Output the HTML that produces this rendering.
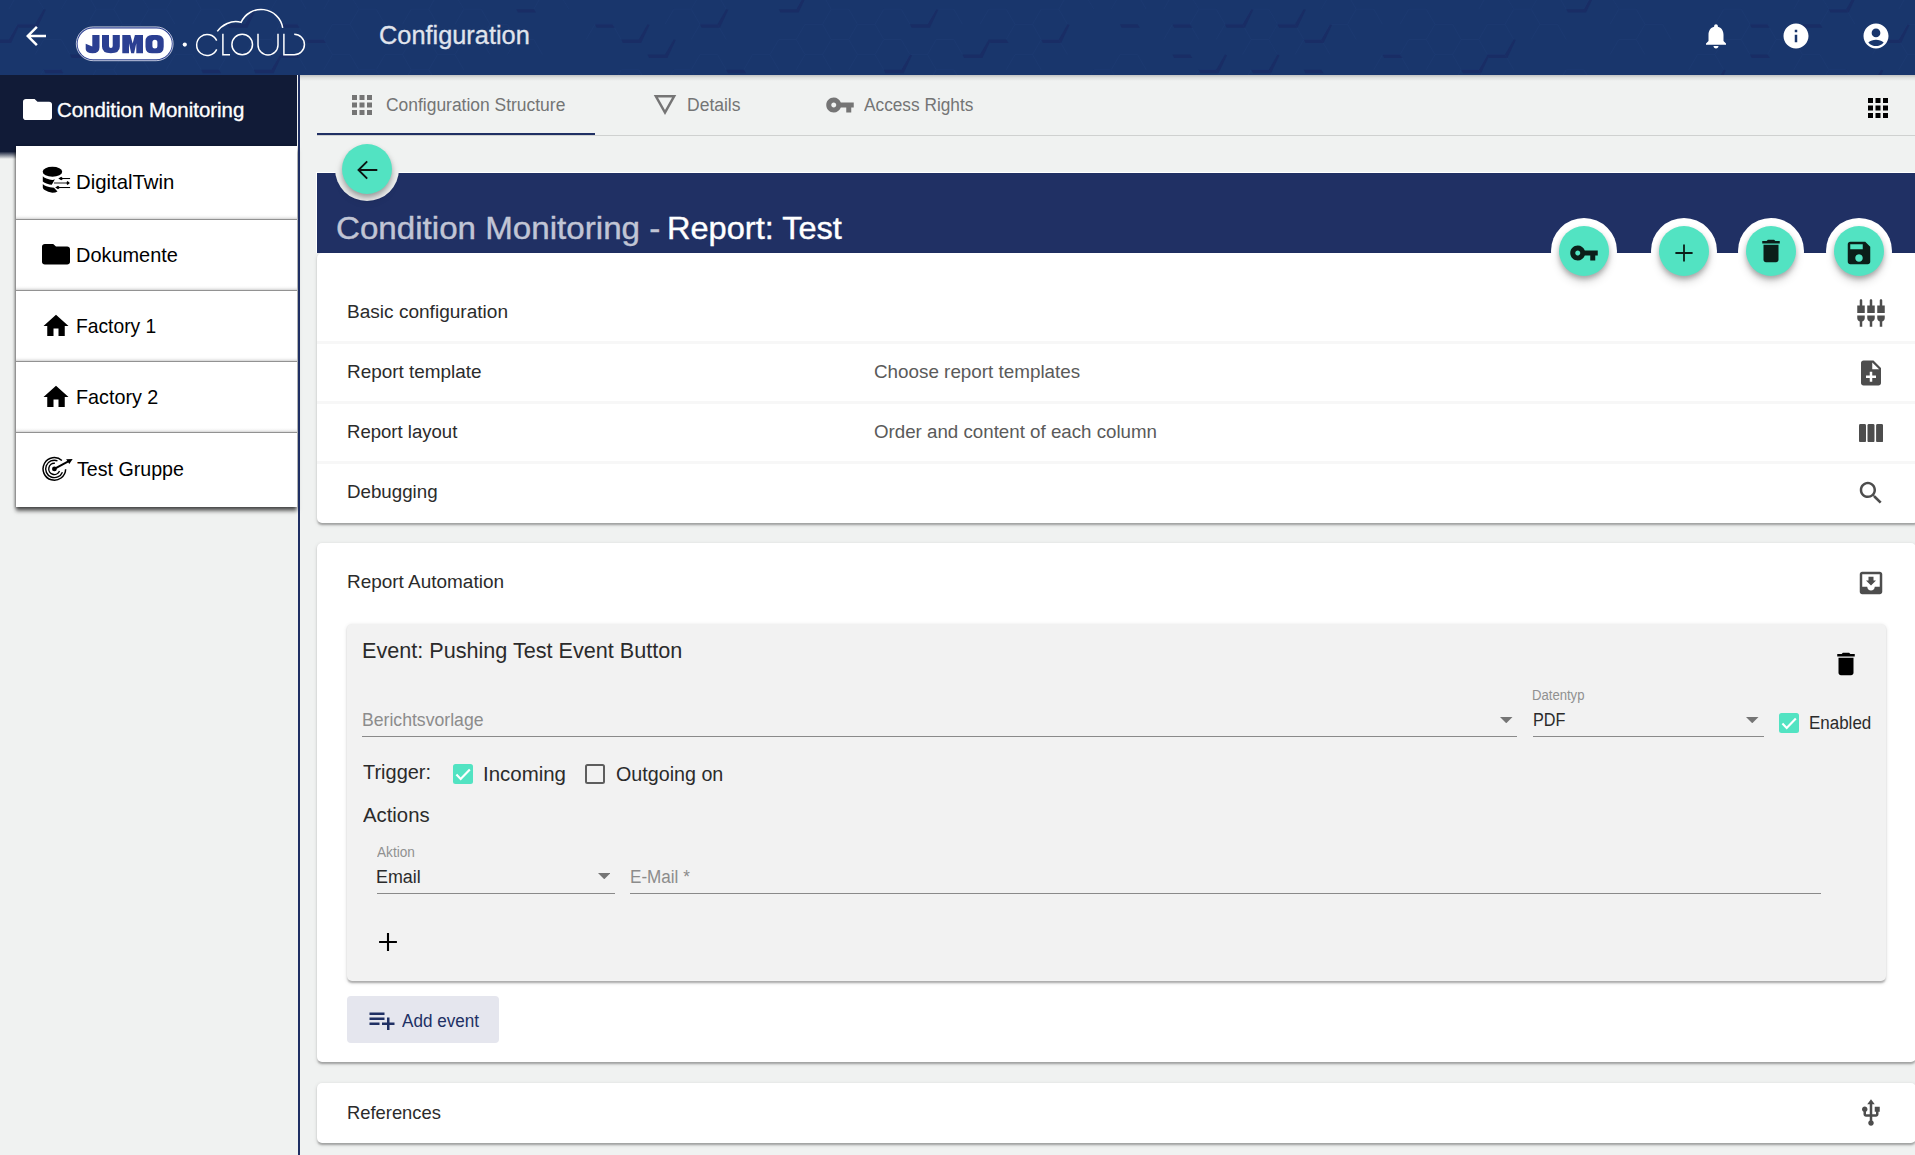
<!DOCTYPE html>
<html lang="en">
<head>
<meta charset="utf-8">
<title>Configuration</title>
<style>
*{box-sizing:border-box;margin:0;padding:0}
html,body{width:1915px;height:1155px;overflow:hidden;background:#f0f2f1;font-family:"Liberation Sans",sans-serif;color:#212121}
.abs{position:absolute}
.t{position:absolute;white-space:nowrap;transform-origin:0 50%;line-height:1}
svg{position:absolute;display:block}
/* header */
#hdr{position:absolute;left:0;top:0;width:1915px;height:75px;background:#19366c;overflow:hidden}
#hdrsh{position:absolute;left:299px;top:75px;width:1616px;height:6px;background:linear-gradient(rgba(0,0,0,.2),rgba(0,0,0,.07) 45%,rgba(0,0,0,0))}
/* sidebar */
#sbh{position:absolute;left:0;top:75px;width:297px;height:71px;background:#111b37}
#sbsh{position:absolute;left:0;top:146px;width:16px;height:13px;background:linear-gradient(#111b37 0,#111b37 42%,rgba(17,27,55,.55) 68%,rgba(17,27,55,0) 100%)}
#sbl{position:absolute;left:16px;top:146px;width:281px;height:361px;background:#fff;box-shadow:0 4px 4px rgba(0,0,0,.58),-1.500px 1px 3px rgba(0,0,0,.4)}
.sdiv{position:absolute;left:0;width:281px;height:5px;background:linear-gradient(rgba(0,0,0,0),rgba(0,0,0,.04) 40%,rgba(0,0,0,.14) 72%,#8a8a8a 80%,#9a9a9a 100%)}
#sbline{position:absolute;left:298.300px;top:75px;width:1.400px;height:1080px;background:#1f2f63}
/* tabs */
#tabline{position:absolute;left:317px;top:134.700px;width:1598px;height:1.200px;background:#cfd1d0}
#tabact{position:absolute;left:317px;top:132.800px;width:278px;height:2.400px;background:#203064}
/* title bar */
#tbar{position:absolute;left:317px;top:173px;width:1598px;height:80px;background:#203064}
.halo{position:absolute;border-radius:50%}
.fab{position:absolute;width:50px;height:50px;border-radius:50%;background:#52e3c2;box-shadow:0 3px 5px rgba(0,0,0,.25),0 6px 10px rgba(0,0,0,.14)}
/* cards */
.card{position:absolute;left:317px;width:1599px;background:#fff;border-radius:5px;box-shadow:0 2.500px 2px -1.250px rgba(0,0,0,.17),0 1.250px 2px rgba(0,0,0,.11),0 1.250px 4px rgba(0,0,0,.12)}
.rsep{position:absolute;left:317px;width:1598px;height:3px;background:#f7f7f7}
#evt{position:absolute;left:347px;top:623.500px;width:1539px;height:357px;background:#f2f2f2;border-radius:5px;box-shadow:0 2.500px 2px -1.250px rgba(0,0,0,.17),0 1.250px 2px rgba(0,0,0,.11),0 1.250px 4px rgba(0,0,0,.12)}
.ul{position:absolute;height:1px;background:#8a8a8a}
#addbtn{position:absolute;left:347px;top:996px;width:152px;height:47px;background:#e5e6ee;border-radius:4px}
.cb{position:absolute;width:20px;height:20px;border-radius:2.5px;background:#52e3c2}
.cbo{position:absolute;width:20px;height:20px;border-radius:2.5px;border:2.3px solid #5e5e5e;background:transparent}
</style>
</head>
<body>
<!-- HEADER -->
<div id="hdrsh"></div>
<div id="hdr"><!-- HEX --><svg style="left:0;top:0" width="1915" height="75" viewBox="0 0 1915 75"><path d="M-43.8 -21.2L-35.0 -36.3L-17.5 -36.3L-8.8 -21.2M-43.8 69.8L-35.0 54.6L-17.5 54.6L-8.8 69.8M-17.5 -36.3L-8.8 -51.5L8.8 -51.5L17.5 -36.3M-17.5 -6.0L-8.8 -21.2L8.8 -21.2L17.5 -6.0M8.8 9.2L17.5 -6.0L35.0 -6.0L43.8 9.2M8.8 39.5L17.5 24.3L35.0 24.3L43.8 39.5M8.8 100.1L17.5 84.9L35.0 84.9L43.8 100.1M35.0 -36.3L43.8 -51.5L61.2 -51.5L70.0 -36.3M35.0 54.6L43.8 39.5L61.2 39.5L70.0 54.6M35.0 84.9L43.8 69.8L61.2 69.8L70.0 84.9M61.2 -21.2L70.0 -36.3L87.5 -36.3L96.2 -21.2M61.2 9.2L70.0 -6.0L87.5 -6.0L96.2 9.2M87.5 -36.3L96.2 -51.5L113.8 -51.5L122.5 -36.3M87.5 24.3L96.2 9.2L113.8 9.2L122.5 24.3M87.5 84.9L96.2 69.8L113.8 69.8L122.5 84.9M113.8 -21.2L122.5 -36.3L140.0 -36.3L148.8 -21.2M113.8 9.2L122.5 -6.0L140.0 -6.0L148.8 9.2M113.8 39.5L122.5 24.3L140.0 24.3L148.8 39.5M113.8 69.8L122.5 54.6L140.0 54.6L148.8 69.8M113.8 100.1L122.5 84.9L140.0 84.9L148.8 100.1M140.0 -36.3L148.8 -51.5L166.2 -51.5L175.0 -36.3M140.0 24.3L148.8 9.2L166.2 9.2L175.0 24.3M140.0 54.6L148.8 39.5L166.2 39.5L175.0 54.6M166.2 -21.2L175.0 -36.3L192.5 -36.3L201.2 -21.2M166.2 9.2L175.0 -6.0L192.5 -6.0L201.2 9.2M166.2 69.8L175.0 54.6L192.5 54.6L201.2 69.8M192.5 -6.0L201.2 -21.2L218.8 -21.2L227.5 -6.0M192.5 24.3L201.2 9.2L218.8 9.2L227.5 24.3M218.8 -21.2L227.5 -36.3L245.0 -36.3L253.8 -21.2M218.8 69.8L227.5 54.6L245.0 54.6L253.8 69.8M245.0 -36.3L253.8 -51.5L271.2 -51.5L280.0 -36.3M245.0 24.3L253.8 9.2L271.2 9.2L280.0 24.3M245.0 54.6L253.8 39.5L271.2 39.5L280.0 54.6M271.2 -21.2L280.0 -36.3L297.5 -36.3L306.2 -21.2M271.2 9.2L280.0 -6.0L297.5 -6.0L306.2 9.2M271.2 39.5L280.0 24.3L297.5 24.3L306.2 39.5M271.2 69.8L280.0 54.6L297.5 54.6L306.2 69.8M271.2 100.1L280.0 84.9L297.5 84.9L306.2 100.1M297.5 54.6L306.2 39.5L323.8 39.5L332.5 54.6M323.8 -21.2L332.5 -36.3L350.0 -36.3L358.8 -21.2M323.8 9.2L332.5 -6.0L350.0 -6.0L358.8 9.2M323.8 39.5L332.5 24.3L350.0 24.3L358.8 39.5M323.8 69.8L332.5 54.6L350.0 54.6L358.8 69.8M350.0 24.3L358.8 9.2L376.2 9.2L385.0 24.3M350.0 84.9L358.8 69.8L376.2 69.8L385.0 84.9M376.2 69.8L385.0 54.6L402.5 54.6L411.2 69.8M402.5 24.3L411.2 9.2L428.8 9.2L437.5 24.3M402.5 54.6L411.2 39.5L428.8 39.5L437.5 54.6M402.5 84.9L411.2 69.8L428.8 69.8L437.5 84.9M428.8 -21.2L437.5 -36.3L455.0 -36.3L463.8 -21.2M428.8 9.2L437.5 -6.0L455.0 -6.0L463.8 9.2M428.8 69.8L437.5 54.6L455.0 54.6L463.8 69.8M455.0 -6.0L463.8 -21.2L481.2 -21.2L490.0 -6.0M455.0 24.3L463.8 9.2L481.2 9.2L490.0 24.3M455.0 54.6L463.8 39.5L481.2 39.5L490.0 54.6M481.2 39.5L490.0 24.3L507.5 24.3L516.2 39.5M507.5 -36.3L516.2 -51.5L533.8 -51.5L542.5 -36.3M507.5 -6.0L516.2 -21.2L533.8 -21.2L542.5 -6.0M507.5 54.6L516.2 39.5L533.8 39.5L542.5 54.6M533.8 -21.2L542.5 -36.3L560.0 -36.3L568.8 -21.2M533.8 9.2L542.5 -6.0L560.0 -6.0L568.8 9.2M533.8 100.1L542.5 84.9L560.0 84.9L568.8 100.1M560.0 -36.3L568.8 -51.5L586.2 -51.5L595.0 -36.3M586.2 -21.2L595.0 -36.3L612.5 -36.3L621.2 -21.2M586.2 39.5L595.0 24.3L612.5 24.3L621.2 39.5M612.5 -6.0L621.2 -21.2L638.8 -21.2L647.5 -6.0M612.5 84.9L621.2 69.8L638.8 69.8L647.5 84.9M665.0 24.3L673.8 9.2L691.2 9.2L700.0 24.3M665.0 84.9L673.8 69.8L691.2 69.8L700.0 84.9M691.2 9.2L700.0 -6.0L717.5 -6.0L726.2 9.2M691.2 39.5L700.0 24.3L717.5 24.3L726.2 39.5M691.2 69.8L700.0 54.6L717.5 54.6L726.2 69.8M743.8 69.8L752.5 54.6L770.0 54.6L778.8 69.8M770.0 54.6L778.8 39.5L796.2 39.5L805.0 54.6M796.2 9.2L805.0 -6.0L822.5 -6.0L831.2 9.2M796.2 39.5L805.0 24.3L822.5 24.3L831.2 39.5M796.2 69.8L805.0 54.6L822.5 54.6L831.2 69.8M822.5 -36.3L831.2 -51.5L848.8 -51.5L857.5 -36.3M822.5 24.3L831.2 9.2L848.8 9.2L857.5 24.3M822.5 54.6L831.2 39.5L848.8 39.5L857.5 54.6M848.8 -21.2L857.5 -36.3L875.0 -36.3L883.8 -21.2M848.8 39.5L857.5 24.3L875.0 24.3L883.8 39.5M848.8 69.8L857.5 54.6L875.0 54.6L883.8 69.8M848.8 100.1L857.5 84.9L875.0 84.9L883.8 100.1M875.0 -36.3L883.8 -51.5L901.2 -51.5L910.0 -36.3M875.0 -6.0L883.8 -21.2L901.2 -21.2L910.0 -6.0M875.0 24.3L883.8 9.2L901.2 9.2L910.0 24.3M875.0 54.6L883.8 39.5L901.2 39.5L910.0 54.6M901.2 69.8L910.0 54.6L927.5 54.6L936.2 69.8M927.5 24.3L936.2 9.2L953.8 9.2L962.5 24.3M927.5 54.6L936.2 39.5L953.8 39.5L962.5 54.6M927.5 84.9L936.2 69.8L953.8 69.8L962.5 84.9M980.0 -36.3L988.8 -51.5L1006.2 -51.5L1015.0 -36.3M980.0 24.3L988.8 9.2L1006.2 9.2L1015.0 24.3M1006.2 39.5L1015.0 24.3L1032.5 24.3L1041.2 39.5M1006.2 69.8L1015.0 54.6L1032.5 54.6L1041.2 69.8M1006.2 100.1L1015.0 84.9L1032.5 84.9L1041.2 100.1M1032.5 24.3L1041.2 9.2L1058.8 9.2L1067.5 24.3M1032.5 54.6L1041.2 39.5L1058.8 39.5L1067.5 54.6M1058.8 9.2L1067.5 -6.0L1085.0 -6.0L1093.8 9.2M1085.0 -6.0L1093.8 -21.2L1111.2 -21.2L1120.0 -6.0M1085.0 84.9L1093.8 69.8L1111.2 69.8L1120.0 84.9M1111.2 -21.2L1120.0 -36.3L1137.5 -36.3L1146.2 -21.2M1111.2 9.2L1120.0 -6.0L1137.5 -6.0L1146.2 9.2M1111.2 69.8L1120.0 54.6L1137.5 54.6L1146.2 69.8M1163.8 9.2L1172.5 -6.0L1190.0 -6.0L1198.8 9.2M1163.8 39.5L1172.5 24.3L1190.0 24.3L1198.8 39.5M1190.0 24.3L1198.8 9.2L1216.2 9.2L1225.0 24.3M1190.0 84.9L1198.8 69.8L1216.2 69.8L1225.0 84.9M1216.2 -21.2L1225.0 -36.3L1242.5 -36.3L1251.2 -21.2M1216.2 39.5L1225.0 24.3L1242.5 24.3L1251.2 39.5M1216.2 100.1L1225.0 84.9L1242.5 84.9L1251.2 100.1M1242.5 24.3L1251.2 9.2L1268.8 9.2L1277.5 24.3M1242.5 54.6L1251.2 39.5L1268.8 39.5L1277.5 54.6M1242.5 84.9L1251.2 69.8L1268.8 69.8L1277.5 84.9M1268.8 39.5L1277.5 24.3L1295.0 24.3L1303.8 39.5M1295.0 54.6L1303.8 39.5L1321.2 39.5L1330.0 54.6M1321.2 9.2L1330.0 -6.0L1347.5 -6.0L1356.2 9.2M1321.2 39.5L1330.0 24.3L1347.5 24.3L1356.2 39.5M1347.5 -36.3L1356.2 -51.5L1373.8 -51.5L1382.5 -36.3M1347.5 24.3L1356.2 9.2L1373.8 9.2L1382.5 24.3M1373.8 69.8L1382.5 54.6L1400.0 54.6L1408.8 69.8M1400.0 -36.3L1408.8 -51.5L1426.2 -51.5L1435.0 -36.3M1400.0 24.3L1408.8 9.2L1426.2 9.2L1435.0 24.3M1400.0 54.6L1408.8 39.5L1426.2 39.5L1435.0 54.6M1426.2 -21.2L1435.0 -36.3L1452.5 -36.3L1461.2 -21.2M1426.2 39.5L1435.0 24.3L1452.5 24.3L1461.2 39.5M1426.2 69.8L1435.0 54.6L1452.5 54.6L1461.2 69.8M1426.2 100.1L1435.0 84.9L1452.5 84.9L1461.2 100.1M1452.5 54.6L1461.2 39.5L1478.8 39.5L1487.5 54.6M1452.5 84.9L1461.2 69.8L1478.8 69.8L1487.5 84.9M1478.8 -21.2L1487.5 -36.3L1505.0 -36.3L1513.8 -21.2M1478.8 9.2L1487.5 -6.0L1505.0 -6.0L1513.8 9.2M1478.8 39.5L1487.5 24.3L1505.0 24.3L1513.8 39.5M1478.8 69.8L1487.5 54.6L1505.0 54.6L1513.8 69.8M1505.0 -36.3L1513.8 -51.5L1531.2 -51.5L1540.0 -36.3M1505.0 24.3L1513.8 9.2L1531.2 9.2L1540.0 24.3M1531.2 -21.2L1540.0 -36.3L1557.5 -36.3L1566.2 -21.2M1531.2 9.2L1540.0 -6.0L1557.5 -6.0L1566.2 9.2M1531.2 39.5L1540.0 24.3L1557.5 24.3L1566.2 39.5M1531.2 100.1L1540.0 84.9L1557.5 84.9L1566.2 100.1M1557.5 -36.3L1566.2 -51.5L1583.8 -51.5L1592.5 -36.3M1557.5 -6.0L1566.2 -21.2L1583.8 -21.2L1592.5 -6.0M1557.5 84.9L1566.2 69.8L1583.8 69.8L1592.5 84.9M1583.8 9.2L1592.5 -6.0L1610.0 -6.0L1618.8 9.2M1610.0 24.3L1618.8 9.2L1636.2 9.2L1645.0 24.3M1610.0 54.6L1618.8 39.5L1636.2 39.5L1645.0 54.6M1636.2 -21.2L1645.0 -36.3L1662.5 -36.3L1671.2 -21.2M1636.2 39.5L1645.0 24.3L1662.5 24.3L1671.2 39.5M1636.2 100.1L1645.0 84.9L1662.5 84.9L1671.2 100.1M1688.8 69.8L1697.5 54.6L1715.0 54.6L1723.8 69.8M1715.0 -36.3L1723.8 -51.5L1741.2 -51.5L1750.0 -36.3M1715.0 -6.0L1723.8 -21.2L1741.2 -21.2L1750.0 -6.0M1715.0 24.3L1723.8 9.2L1741.2 9.2L1750.0 24.3M1715.0 54.6L1723.8 39.5L1741.2 39.5L1750.0 54.6M1741.2 -21.2L1750.0 -36.3L1767.5 -36.3L1776.2 -21.2M1741.2 39.5L1750.0 24.3L1767.5 24.3L1776.2 39.5M1741.2 100.1L1750.0 84.9L1767.5 84.9L1776.2 100.1M1767.5 -36.3L1776.2 -51.5L1793.8 -51.5L1802.5 -36.3M1767.5 -6.0L1776.2 -21.2L1793.8 -21.2L1802.5 -6.0M1767.5 54.6L1776.2 39.5L1793.8 39.5L1802.5 54.6M1793.8 9.2L1802.5 -6.0L1820.0 -6.0L1828.8 9.2M1793.8 69.8L1802.5 54.6L1820.0 54.6L1828.8 69.8M1820.0 -6.0L1828.8 -21.2L1846.2 -21.2L1855.0 -6.0M1820.0 24.3L1828.8 9.2L1846.2 9.2L1855.0 24.3M1820.0 84.9L1828.8 69.8L1846.2 69.8L1855.0 84.9M1846.2 -21.2L1855.0 -36.3L1872.5 -36.3L1881.2 -21.2M1846.2 100.1L1855.0 84.9L1872.5 84.9L1881.2 100.1M1872.5 -6.0L1881.2 -21.2L1898.8 -21.2L1907.5 -6.0M1872.5 54.6L1881.2 39.5L1898.8 39.5L1907.5 54.6M1898.8 -21.2L1907.5 -36.3L1925.0 -36.3L1933.8 -21.2M1898.8 9.2L1907.5 -6.0L1925.0 -6.0L1933.8 9.2M1898.8 39.5L1907.5 24.3L1925.0 24.3L1933.8 39.5M1898.8 69.8L1907.5 54.6L1925.0 54.6L1933.8 69.8" fill="none" stroke="#2a4580" stroke-opacity=".20" stroke-width="1"/><path d="M-8.8 39.5L8.8 39.5L17.5 24.3L19.5 25.0L11.1 42.9L-7.0 42.9ZM-8.8 100.1L8.8 100.1L11.1 103.5L-7.0 103.5ZM17.5 -6.0L35.0 -6.0L37.4 -2.6L19.2 -2.6ZM17.5 24.3L35.0 24.3L43.8 9.2L45.8 9.8L37.4 27.7L19.2 27.7ZM43.8 69.8L61.2 69.8L63.6 73.2L45.5 73.2ZM70.0 54.6L87.5 54.6L89.9 58.0L71.7 58.0ZM122.5 -6.0L140.0 -6.0L148.8 -21.2L150.8 -20.5L142.4 -2.6L124.2 -2.6ZM122.5 54.6L140.0 54.6L148.8 39.5L150.8 40.1L142.4 58.0L124.2 58.0ZM175.0 84.9L192.5 84.9L194.9 88.3L176.7 88.3ZM201.2 69.8L218.8 69.8L221.1 73.2L202.9 73.2ZM227.5 -6.0L245.0 -6.0L253.8 -21.2L255.8 -20.5L247.4 -2.6L229.2 -2.6ZM227.5 24.3L245.0 24.3L253.8 9.2L255.8 9.8L247.4 27.7L229.2 27.7ZM227.5 84.9L245.0 84.9L247.4 88.3L229.2 88.3ZM227.5 115.2L245.0 115.2L253.8 100.1L255.8 100.8L247.4 118.6L229.2 118.6ZM253.8 69.8L271.2 69.8L280.0 54.6L282.0 55.3L273.6 73.2L255.4 73.2ZM280.0 24.3L297.5 24.3L299.9 27.7L281.7 27.7ZM280.0 54.6L297.5 54.6L299.9 58.0L281.7 58.0ZM306.2 39.5L323.8 39.5L326.1 42.9L307.9 42.9ZM437.5 -6.0L455.0 -6.0L463.8 -21.2L465.8 -20.5L457.4 -2.6L439.2 -2.6ZM437.5 115.2L455.0 115.2L457.4 118.6L439.2 118.6ZM516.2 -21.2L533.8 -21.2L542.5 -36.3L544.5 -35.6L536.1 -17.8L518.0 -17.8ZM516.2 9.2L533.8 9.2L536.1 12.6L518.0 12.6ZM542.5 -6.0L560.0 -6.0L568.8 -21.2L570.8 -20.5L562.4 -2.6L544.2 -2.6ZM542.5 84.9L560.0 84.9L562.4 88.3L544.2 88.3ZM542.5 115.2L560.0 115.2L568.8 100.1L570.8 100.8L562.4 118.6L544.2 118.6ZM568.8 -21.2L586.2 -21.2L588.6 -17.8L570.5 -17.8ZM568.8 100.1L586.2 100.1L595.0 84.9L597.0 85.6L588.6 103.5L570.5 103.5ZM595.0 -6.0L612.5 -6.0L621.2 -21.2L623.3 -20.5L614.9 -2.6L596.7 -2.6ZM595.0 24.3L612.5 24.3L614.9 27.7L596.7 27.7ZM621.2 39.5L638.8 39.5L647.5 24.3L649.5 25.0L641.1 42.9L623.0 42.9ZM647.5 54.6L665.0 54.6L673.8 39.5L675.8 40.1L667.4 58.0L649.2 58.0ZM647.5 115.2L665.0 115.2L673.8 100.1L675.8 100.8L667.4 118.6L649.2 118.6ZM700.0 24.3L717.5 24.3L726.2 9.2L728.3 9.8L719.9 27.7L701.7 27.7ZM700.0 115.2L717.5 115.2L719.9 118.6L701.7 118.6ZM726.2 69.8L743.8 69.8L746.1 73.2L728.0 73.2ZM752.5 115.2L770.0 115.2L778.8 100.1L780.8 100.8L772.4 118.6L754.2 118.6ZM778.8 9.2L796.2 9.2L805.0 -6.0L807.0 -5.3L798.6 12.6L780.5 12.6ZM831.2 -21.2L848.8 -21.2L851.1 -17.8L833.0 -17.8ZM831.2 100.1L848.8 100.1L857.5 84.9L859.5 85.6L851.1 103.5L833.0 103.5ZM857.5 -6.0L875.0 -6.0L877.4 -2.6L859.2 -2.6ZM883.8 -21.2L901.2 -21.2L910.0 -36.3L912.0 -35.6L903.6 -17.8L885.5 -17.8ZM883.8 69.8L901.2 69.8L910.0 54.6L912.0 55.3L903.6 73.2L885.5 73.2ZM910.0 24.3L927.5 24.3L936.2 9.2L938.3 9.8L929.9 27.7L911.7 27.7ZM910.0 115.2L927.5 115.2L936.2 100.1L938.3 100.8L929.9 118.6L911.7 118.6ZM936.2 -21.2L953.8 -21.2L956.1 -17.8L938.0 -17.8ZM962.5 -6.0L980.0 -6.0L982.4 -2.6L964.2 -2.6ZM962.5 54.6L980.0 54.6L988.8 39.5L990.8 40.1L982.4 58.0L964.2 58.0ZM962.5 115.2L980.0 115.2L982.4 118.6L964.2 118.6ZM988.8 -21.2L1006.2 -21.2L1015.0 -36.3L1017.0 -35.6L1008.6 -17.8L990.5 -17.8ZM988.8 39.5L1006.2 39.5L1008.6 42.9L990.5 42.9ZM988.8 100.1L1006.2 100.1L1008.6 103.5L990.5 103.5ZM1041.2 -21.2L1058.8 -21.2L1067.5 -36.3L1069.5 -35.6L1061.1 -17.8L1043.0 -17.8ZM1041.2 39.5L1058.8 39.5L1067.5 24.3L1069.5 25.0L1061.1 42.9L1043.0 42.9ZM1120.0 24.3L1137.5 24.3L1139.9 27.7L1121.7 27.7ZM1146.2 100.1L1163.8 100.1L1172.5 84.9L1174.5 85.6L1166.1 103.5L1148.0 103.5ZM1172.5 24.3L1190.0 24.3L1192.4 27.7L1174.2 27.7ZM1172.5 54.6L1190.0 54.6L1192.4 58.0L1174.2 58.0ZM1198.8 69.8L1216.2 69.8L1225.0 54.6L1227.0 55.3L1218.6 73.2L1200.5 73.2ZM1225.0 24.3L1242.5 24.3L1251.2 9.2L1253.3 9.8L1244.9 27.7L1226.7 27.7ZM1251.2 69.8L1268.8 69.8L1277.5 54.6L1279.5 55.3L1271.1 73.2L1253.0 73.2ZM1277.5 -6.0L1295.0 -6.0L1303.8 -21.2L1305.8 -20.5L1297.4 -2.6L1279.2 -2.6ZM1277.5 24.3L1295.0 24.3L1303.8 9.2L1305.8 9.8L1297.4 27.7L1279.2 27.7ZM1303.8 39.5L1321.2 39.5L1330.0 24.3L1332.0 25.0L1323.6 42.9L1305.5 42.9ZM1303.8 69.8L1321.2 69.8L1323.6 73.2L1305.5 73.2ZM1303.8 100.1L1321.2 100.1L1323.6 103.5L1305.5 103.5ZM1356.2 -21.2L1373.8 -21.2L1382.5 -36.3L1384.5 -35.6L1376.1 -17.8L1358.0 -17.8ZM1382.5 -6.0L1400.0 -6.0L1402.4 -2.6L1384.2 -2.6ZM1382.5 54.6L1400.0 54.6L1402.4 58.0L1384.2 58.0ZM1382.5 115.2L1400.0 115.2L1408.8 100.1L1410.8 100.8L1402.4 118.6L1384.2 118.6ZM1408.8 -21.2L1426.2 -21.2L1435.0 -36.3L1437.0 -35.6L1428.6 -17.8L1410.5 -17.8ZM1435.0 -6.0L1452.5 -6.0L1461.2 -21.2L1463.3 -20.5L1454.9 -2.6L1436.7 -2.6ZM1461.2 69.8L1478.8 69.8L1487.5 54.6L1489.5 55.3L1481.1 73.2L1463.0 73.2ZM1461.2 100.1L1478.8 100.1L1487.5 84.9L1489.5 85.6L1481.1 103.5L1463.0 103.5ZM1487.5 54.6L1505.0 54.6L1513.8 39.5L1515.8 40.1L1507.4 58.0L1489.2 58.0ZM1513.8 -21.2L1531.2 -21.2L1533.6 -17.8L1515.5 -17.8ZM1566.2 9.2L1583.8 9.2L1592.5 -6.0L1594.5 -5.3L1586.1 12.6L1568.0 12.6ZM1592.5 115.2L1610.0 115.2L1618.8 100.1L1620.8 100.8L1612.4 118.6L1594.2 118.6ZM1618.8 -21.2L1636.2 -21.2L1638.6 -17.8L1620.5 -17.8ZM1697.5 84.9L1715.0 84.9L1723.8 69.8L1725.8 70.5L1717.4 88.3L1699.2 88.3ZM1723.8 -21.2L1741.2 -21.2L1743.6 -17.8L1725.5 -17.8ZM1723.8 100.1L1741.2 100.1L1743.6 103.5L1725.5 103.5ZM1750.0 24.3L1767.5 24.3L1769.9 27.7L1751.7 27.7ZM1750.0 54.6L1767.5 54.6L1769.9 58.0L1751.7 58.0ZM1750.0 115.2L1767.5 115.2L1769.9 118.6L1751.7 118.6ZM1802.5 24.3L1820.0 24.3L1822.4 27.7L1804.2 27.7ZM1828.8 9.2L1846.2 9.2L1855.0 -6.0L1857.0 -5.3L1848.6 12.6L1830.5 12.6ZM1828.8 100.1L1846.2 100.1L1848.6 103.5L1830.5 103.5ZM1855.0 84.9L1872.5 84.9L1881.2 69.8L1883.3 70.5L1874.9 88.3L1856.7 88.3ZM1881.2 39.5L1898.8 39.5L1907.5 24.3L1909.5 25.0L1901.1 42.9L1883.0 42.9ZM1907.5 115.2L1925.0 115.2L1933.8 100.1L1935.8 100.8L1927.4 118.6L1909.2 118.6Z" fill="#1a1f5a" fill-opacity=".36"/></svg><!-- /HEX --></div>

<!-- SIDEBAR -->
<div id="sbh"></div>
<div id="sbsh"></div>
<div id="sbl">
  <div class="sdiv" style="top:69px"></div>
  <div class="sdiv" style="top:140px"></div>
  <div class="sdiv" style="top:211px"></div>
  <div class="sdiv" style="top:281.500px"></div>
</div>
<div id="sbline"></div>

<!-- TABS -->
<div id="tabline"></div>
<div id="tabact"></div>

<!-- TITLE BAR -->
<div style="position:absolute;left:316px;top:172px;width:1600px;height:81px;background:#fff"></div>
<div id="tbar"></div>

<!-- CARDS -->
<div class="card" style="top:253px;height:269.500px;width:1602px;border-radius:5px"></div>
<div class="rsep" style="top:341px"></div>
<div class="rsep" style="top:401px"></div>
<div class="rsep" style="top:461px"></div>
<div class="card" style="top:543px;height:519px"></div>
<div id="evt"></div>
<div id="addbtn"></div>
<div class="card" style="top:1083px;height:60px"></div>

<!-- FABS -->
<div class="halo" style="left:335px;top:137px;width:64px;height:64px;background:#f0f2f1"></div>
<div class="fab" style="left:342px;top:144px"></div>
<div class="halo" style="left:1551px;top:218px;width:66px;height:66px;background:#fff"></div>
<div class="halo" style="left:1651px;top:218px;width:66px;height:66px;background:#fff"></div>
<div class="halo" style="left:1738px;top:218px;width:66px;height:66px;background:#fff"></div>
<div class="halo" style="left:1826px;top:218px;width:66px;height:66px;background:#fff"></div>
<div class="fab" style="left:1559px;top:226px"></div>
<div class="fab" style="left:1659px;top:226px"></div>
<div class="fab" style="left:1746px;top:226px"></div>
<div class="fab" style="left:1834px;top:226px"></div>

<!-- TEXT -->
<span class="t" style="left:379.41px;top:22.66px;font-size:25.5px;line-height:25.5px;color:#e0e4ec;transform:scaleX(0.9940);-webkit-text-stroke:.3px #e0e4ec;">Configuration</span>
<span class="t" style="left:56.60px;top:99.98px;font-size:20.4px;line-height:20.4px;color:#ffffff;transform:scaleX(1.0017);-webkit-text-stroke:.35px #fff;">Condition Monitoring</span>
<span class="t" style="left:76.00px;top:171.98px;font-size:20.4px;line-height:20.4px;color:#000;transform:scaleX(0.9975);">DigitalTwin</span>
<span class="t" style="left:76.02px;top:244.98px;font-size:20.4px;line-height:20.4px;color:#000;transform:scaleX(0.9773);">Dokumente</span>
<span class="t" style="left:76.06px;top:315.98px;font-size:20.4px;line-height:20.4px;color:#000;transform:scaleX(0.9444);">Factory 1</span>
<span class="t" style="left:76.03px;top:386.98px;font-size:20.4px;line-height:20.4px;color:#000;transform:scaleX(0.9684);">Factory 2</span>
<span class="t" style="left:77.00px;top:458.98px;font-size:20.4px;line-height:20.4px;color:#000;transform:scaleX(0.9627);">Test Gruppe</span>
<span class="t" style="left:385.60px;top:97.14px;font-size:17.85px;line-height:17.85px;color:#747575;transform:scaleX(0.9773);">Configuration Structure</span>
<span class="t" style="left:687.02px;top:97.14px;font-size:17.85px;line-height:17.85px;color:#747575;transform:scaleX(0.9810);">Details</span>
<span class="t" style="left:863.60px;top:97.14px;font-size:17.85px;line-height:17.85px;color:#747575;transform:scaleX(0.9671);">Access Rights</span>
<span class="t" style="left:335.96px;top:213.27px;font-size:31.875px;line-height:31.875px;color:#c1c5d5;transform:scaleX(1.0404);-webkit-text-stroke:.4px #c1c5d5;">Condition Monitoring -</span>
<span class="t" style="left:666.96px;top:213.27px;font-size:31.875px;line-height:31.875px;color:#ffffff;transform:scaleX(1.0217);-webkit-text-stroke:.4px #fff;">Report: Test</span>
<span class="t" style="left:347.00px;top:302.06px;font-size:19.125px;line-height:19.125px;color:#2b2b2b;transform:scaleX(0.9973);">Basic configuration</span>
<span class="t" style="left:347.01px;top:362.06px;font-size:19.125px;line-height:19.125px;color:#2b2b2b;transform:scaleX(0.9901);">Report template</span>
<span class="t" style="left:347.03px;top:422.06px;font-size:19.125px;line-height:19.125px;color:#2b2b2b;transform:scaleX(0.9705);">Report layout</span>
<span class="t" style="left:347.02px;top:482.06px;font-size:19.125px;line-height:19.125px;color:#2b2b2b;transform:scaleX(0.9800);">Debugging</span>
<span class="t" style="left:874.00px;top:362.06px;font-size:19.125px;line-height:19.125px;color:#5a5a5a;transform:scaleX(0.9852);">Choose report templates</span>
<span class="t" style="left:874.00px;top:422.06px;font-size:19.125px;line-height:19.125px;color:#5a5a5a;transform:scaleX(0.9795);">Order and content of each column</span>
<span class="t" style="left:347.01px;top:572.06px;font-size:19.125px;line-height:19.125px;color:#2b2b2b;transform:scaleX(0.9917);">Report Automation</span>
<span class="t" style="left:362.06px;top:638.82px;font-size:22.95px;line-height:22.95px;color:#2b2b2b;transform:scaleX(0.9419);">Event: Pushing Test Event Button</span>
<span class="t" style="left:362.08px;top:710.06px;font-size:19.125px;line-height:19.125px;color:#8c8c8c;transform:scaleX(0.9225);">Berichtsvorlage</span>
<span class="t" style="left:1532.48px;top:688.16px;font-size:14.28px;line-height:14.28px;color:#909090;transform:scaleX(0.9187);">Datentyp</span>
<span class="t" style="left:1532.55px;top:710.06px;font-size:19.125px;line-height:19.125px;color:#2b2b2b;transform:scaleX(0.8482);">PDF</span>
<span class="t" style="left:1808.71px;top:713.06px;font-size:19.125px;line-height:19.125px;color:#2b2b2b;transform:scaleX(0.8876);">Enabled</span>
<span class="t" style="left:363.00px;top:761.98px;font-size:20.4px;line-height:20.4px;color:#2b2b2b;transform:scaleX(0.9789);">Trigger:</span>
<span class="t" style="left:483.40px;top:763.98px;font-size:20.4px;line-height:20.4px;color:#2b2b2b;transform:scaleX(1.0025);">Incoming</span>
<span class="t" style="left:616.00px;top:763.98px;font-size:20.4px;line-height:20.4px;color:#2b2b2b;transform:scaleX(0.9660);">Outgoing on</span>
<span class="t" style="left:363.00px;top:804.98px;font-size:20.4px;line-height:20.4px;color:#2b2b2b;transform:scaleX(0.9959);">Actions</span>
<span class="t" style="left:377.40px;top:845.16px;font-size:14.28px;line-height:14.28px;color:#909090;transform:scaleX(0.9557);">Aktion</span>
<span class="t" style="left:376.46px;top:867.06px;font-size:19.125px;line-height:19.125px;color:#2b2b2b;transform:scaleX(0.9355);">Email</span>
<span class="t" style="left:629.71px;top:867.06px;font-size:19.125px;line-height:19.125px;color:#8c8c8c;transform:scaleX(0.8938);">E-Mail *</span>
<span class="t" style="left:402.00px;top:1013.14px;font-size:17.85px;line-height:17.85px;color:#203064;transform:scaleX(0.9577);">Add event</span>
<span class="t" style="left:347.04px;top:1103.06px;font-size:19.125px;line-height:19.125px;color:#2b2b2b;transform:scaleX(0.9608);">References</span>
<!-- /TEXT -->
<!-- LOGO -->
<svg style="left:0;top:0" width="330" height="75" viewBox="0 0 330 75">
<rect x="76.300" y="26.900" width="96.800" height="33.800" rx="16.900" fill="#2b3f92" stroke="#fff" stroke-width=".7"/>
<rect x="77.600" y="28.500" width="94.200" height="30.700" rx="15.350" fill="#fff"/>
<g fill="#2b3f92">
<path d="M92.300 34.900H99.500V47.200Q99.500 53.300 92.600 53.300Q86.300 53.300 85.700 49.200V43.700L92.300 46.500Z"/>
<path d="M102 34.900H109V46Q109 47.900 110.900 47.900Q112.700 47.900 112.700 46V34.900H119.800V46.600Q119.800 53.300 110.900 53.300Q102 53.300 102 46.600Z"/>
<path d="M122.300 53.200V34.900H130.400L132.650 43.400L134.900 34.900H143V53.200H136.300V43.200L134.100 53.200H131.200L129 43.200V53.200Z"/>
<path fill-rule="evenodd" d="M152 34.900H157.200Q163.700 34.900 163.700 41.400V46.700Q163.700 53.300 157.200 53.300H152Q145.500 53.300 145.500 46.700V41.400Q145.500 34.900 152 34.900ZM154.900 39.700Q152.400 39.700 152.400 42.200V46Q152.400 48.500 154.900 48.500Q157.400 48.500 157.400 46V42.200Q157.400 39.700 154.900 39.700Z"/>
</g>
<circle cx="184.800" cy="44.600" r="2.100" fill="#fff"/>
<g fill="none" stroke="#fff" stroke-width="1.500" stroke-linecap="butt">
<path d="M216.700 40.600A10.500 10.500 0 1 0 216.700 49.400"/>
<path d="M222.900 33.800V54.800H230"/>
<circle cx="242.200" cy="44.500" r="10.300"/>
<path d="M258 33.800V45A10 10 0 0 0 278 45V33.800"/>
<path d="M283.900 33.800V54.800H294.200A10.250 10.250 0 0 0 294.200 34.300"/>
<path d="M217.300 31.400C221.500 25.500 231.500 19.300 241.100 22.400A21.900 21.900 0 0 1 282.700 27.800"/>
</g>
</svg>
<!-- digitaltwin icon -->
<svg style="left:42px;top:166px" width="29" height="28" viewBox="42 166 29 28">
<g fill="#000">
<ellipse cx="52.450" cy="171.750" rx="9.750" ry="4.900"/>
<path d="M42.800 176.300Q43.800 177.600 46.400 178.500Q49.900 179.800 52.300 179.900Q53.800 179.800 54.900 179.200L51.800 184.800Q49.900 184.800 46.400 183.600Q43.600 182.600 42.800 181.500Z"/>
<path d="M42.800 184.100Q43.800 185.400 46.400 186.300Q49.900 187.600 54 187.700L57.500 191.500Q55.500 192.700 52.300 192.700Q48.100 192.300 44.700 190.100Q43 188.900 42.800 187.400Z"/>
<path d="M60 178H70.100V179.050H60Z"/>
<path d="M58.300 178.500L61.300 176.700Q62.300 177.600 63.400 178.500Q62.300 179.400 61.300 180.300Z"/>
<path d="M58 187H70.100V188.050H58Z"/>
<path d="M55.200 187.500L58 185.800Q59 186.600 59.900 187.500Q59 188.400 58 189.300Z"/>
<path d="M69.900 183L67.500 181.100Q66.600 182 65.800 183Q66.600 184 67.500 184.900Z"/>
</g>
<rect x="54" y="182.050" width="12.500" height="1.900" fill="#8a8a8a"/>
</svg>
<!-- target icon -->
<svg style="left:41px;top:456px" width="33" height="27" viewBox="41 456 33 27" fill="none" stroke="#000">
<path d="M61.900 460.500A11.300 11.300 0 1 0 65.650 469.300" stroke-width="1.500"/>
<path d="M57.480 460.780A8.700 8.700 0 1 0 62.430 472.160" stroke-width="1.400"/>
<path d="M54.850 463.320A5.600 5.600 0 1 0 59.510 471.090" stroke-width="1.400"/>
<circle cx="54.400" cy="468.900" r="2.400" fill="#000" stroke="none"/>
<path d="M54.400 468.900L68.300 461.400" stroke-width="1.900"/>
<path d="M66.100 459.200L72.700 459.100L69.300 463.900Z" fill="#000" stroke="none"/>
</svg>
<!-- /LOGO -->
<!-- ICONS -->
<svg style="left:21px;top:21px" width="30" height="30" viewBox="0 0 24 24" fill="#fff"><path d="M20 11H7.83l5.59-5.59L12 4l-8 8 8 8 1.41-1.41L7.83 13H20v-2z"/></svg>
<svg style="left:1701px;top:21px" width="30" height="30" viewBox="0 0 24 24" fill="#fff"><path d="M12 22c1.1 0 2-.9 2-2h-4c0 1.1.89 2 2 2zm6-6v-5c0-3.07-1.64-5.64-4.5-6.32V4c0-.83-.67-1.5-1.5-1.5s-1.5.67-1.5 1.5v.68C7.63 5.36 6 7.92 6 11v5l-2 2v1h16v-1l-2-2z"/></svg>
<svg style="left:1781px;top:21px" width="30" height="30" viewBox="0 0 24 24" fill="#fff"><path d="M12 2C6.48 2 2 6.48 2 12s4.48 10 10 10 10-4.48 10-10S17.52 2 12 2zm1 15h-2v-6h2v6zm0-8h-2V7h2v2z"/></svg>
<svg style="left:1861px;top:21px" width="30" height="30" viewBox="0 0 24 24" fill="#fff"><path d="M12 2C6.48 2 2 6.48 2 12s4.48 10 10 10 10-4.48 10-10S17.52 2 12 2zm0 4c1.93 0 3.5 1.57 3.5 3.5S13.930 13 12 13s-3.5-1.57-3.5-3.5S10.070 6 12 6zm0 14c-2.03 0-4.43-.82-6.14-2.88C7.55 15.800 9.680 15 12 15s4.450.800 6.140 2.120C16.430 19.180 14.030 20 12 20z"/></svg>
<!-- sidebar icons -->
<svg style="left:23px;top:99px" width="29" height="21" viewBox="2 4 20 16" preserveAspectRatio="none" fill="#fff"><path d="M10 4H4c-1.1 0-2 .9-2 2v12c0 1.100.9 2 2 2h16c1.100 0 2-.9 2-2V8c0-1.100-.9-2-2-2h-8l-2-2z"/></svg>
<svg style="left:42px;top:244px" width="28" height="20.600" viewBox="2 4 20 16" preserveAspectRatio="none" fill="#000"><path d="M10 4H4c-1.1 0-2 .9-2 2v12c0 1.100.9 2 2 2h16c1.100 0 2-.9 2-2V8c0-1.100-.9-2-2-2h-8l-2-2z"/></svg>
<svg style="left:41px;top:311px" width="30" height="30" viewBox="0 0 24 24" fill="#000"><path d="M10 20v-6h4v6h5v-8h3L12 3 2 12h3v8z"/></svg>
<svg style="left:41px;top:382px" width="30" height="30" viewBox="0 0 24 24" fill="#000"><path d="M10 20v-6h4v6h5v-8h3L12 3 2 12h3v8z"/></svg>
<!-- tab icons -->
<svg style="left:347px;top:90px" width="30" height="30" viewBox="0 0 24 24" fill="#757575"><path d="M4 8h4V4H4v4zm6 12h4v-4h-4v4zm-6 0h4v-4H4v4zm0-6h4v-4H4v4zm6 0h4v-4h-4v4zm6-10v4h4V4h-4zm-6 4h4V4h-4v4zm6 6h4v-4h-4v4zm0 6h4v-4h-4v4z"/></svg>
<svg style="left:650px;top:90px" width="30" height="30" viewBox="0 0 24 24" fill="#757575"><path d="M3 4l9 16 9-16H3zm3.380 2h11.250L12 16 6.380 6z"/></svg>
<svg style="left:825px;top:90px" width="30" height="30" viewBox="0 0 24 24" fill="#757575"><path d="M12.650 10C11.830 7.670 9.610 6 7 6c-3.310 0-6 2.690-6 6s2.690 6 6 6c2.610 0 4.830-1.670 5.650-4H17v4h4v-4h2v-4H12.650zM7 14c-1.100 0-2-.9-2-2s.9-2 2-2 2 .9 2 2-.9 2-2 2z"/></svg>
<svg style="left:1863px;top:93px" width="30" height="30" viewBox="0 0 24 24" fill="#000"><path d="M4 8h4V4H4v4zm6 12h4v-4h-4v4zm-6 0h4v-4H4v4zm0-6h4v-4H4v4zm6 0h4v-4h-4v4zm6-10v4h4V4h-4zm-6 4h4V4h-4v4zm6 6h4v-4h-4v4zm0 6h4v-4h-4v4z"/></svg>
<!-- back fab arrow -->
<svg style="left:352px;top:154px" width="30" height="30" viewBox="0 0 30 30" fill="none" stroke="#0b1512" stroke-width="1.900"><path d="M25.300 16H6.800M15.200 7.300L6.500 16l8.700 8.700"/></svg>
<!-- fab icons -->
<svg style="left:1569px;top:238px" width="30" height="30" viewBox="0 0 24 24" fill="#0b1e19"><path d="M12.650 10C11.830 7.670 9.610 6 7 6c-3.310 0-6 2.690-6 6s2.690 6 6 6c2.610 0 4.830-1.670 5.650-4H17v4h4v-4h2v-4H12.650zM7 14c-1.100 0-2-.9-2-2s.9-2 2-2 2 .9 2 2-.9 2-2 2z"/></svg>
<svg style="left:1668.500px;top:238px" width="30" height="30" viewBox="0 0 30 30" fill="none" stroke="#0b1e19" stroke-width="1.800"><path d="M15 6.400v17.200M6.400 15h17.200"/></svg>
<svg style="left:1756px;top:236px" width="30" height="30" viewBox="0 0 24 24" fill="#0b1e19"><path d="M6 19c0 1.100.9 2 2 2h8c1.100 0 2-.9 2-2V7H6v12zM19 4h-3.500l-1-1h-5l-1 1H5v2h14V4z"/></svg>
<svg style="left:1844px;top:238px" width="30" height="30" viewBox="0 0 24 24" fill="#0b1e19"><path d="M17 3H5c-1.110 0-2 .9-2 2v14c0 1.100.890 2 2 2h14c1.100 0 2-.9 2-2V7l-4-4zm-5 16c-1.660 0-3-1.340-3-3s1.340-3 3-3 3 1.340 3 3-1.340 3-3 3zm3-10H5V5h10v4z"/></svg>
<!-- row icons -->
<svg style="left:1856px;top:298px" width="30" height="30" viewBox="0 0 24 24" fill="#4d4d4d"><path d="M5 2c0-.55-.45-1-1-1s-1 .45-1 1v4H1v6h6V6H5V2zm4 14c0 1.300.840 2.400 2 2.820V23h2v-4.180c1.160-.410 2-1.510 2-2.820v-2H9v2zm-8 0c0 1.300.840 2.400 2 2.820V23h2v-4.180C6.160 18.400 7 17.300 7 16v-2H1v2zM21 6V2c0-.55-.45-1-1-1s-1 .45-1 1v4h-2v6h6V6h-2zm-8-4c0-.55-.45-1-1-1s-1 .45-1 1v4H9v6h6V6h-2V2zm4 14c0 1.300.840 2.400 2 2.820V23h2v-4.180c1.160-.410 2-1.510 2-2.820v-2h-6v2z"/></svg>
<svg style="left:1856px;top:358px" width="30" height="30" viewBox="0 0 24 24" fill="#4d4d4d"><path d="M14 2H6c-1.100 0-1.990.9-1.990 2L4 20c0 1.100.890 2 1.990 2H18c1.100 0 2-.9 2-2V8l-6-6zm2 14h-3v3h-2v-3H8v-2h3v-3h2v3h3v2zm-3-7V3.500L18.500 9H13z"/></svg>
<svg style="left:1858.500px;top:424px" width="24.200" height="18.200" viewBox="0 0 24.200 18.200" fill="#4d4d4d"><rect x="0" y="0" width="7" height="18.200" rx="1.400"/><rect x="8.500" y="0" width="7" height="18.200" rx="1.400"/><rect x="17.100" y="0" width="7" height="18.200" rx="1.400"/></svg>
<svg style="left:1856px;top:478px" width="30" height="30" viewBox="0 0 24 24" fill="#4d4d4d"><path d="M15.500 14h-.79l-.28-.27C15.410 12.590 16 11.110 16 9.500 16 5.910 13.090 3 9.500 3S3 5.910 3 9.500 5.910 16 9.500 16c1.610 0 3.090-.59 4.230-1.570l.27.280v.79l5 4.990L20.490 19l-4.990-5zm-6 0C7.010 14 5 11.990 5 9.500S7.010 5 9.500 5 14 7.010 14 9.500 11.990 14 9.500 14z"/></svg>
<svg style="left:1856px;top:568px" width="30" height="30" viewBox="0 0 24 24" fill="#4d4d4d"><path d="M19 3H4.990c-1.110 0-1.980.9-1.980 2L3 19c0 1.100.880 2 1.990 2H19c1.100 0 2-.9 2-2V5c0-1.100-.9-2-2-2zm0 12h-4c0 1.660-1.350 3-3 3s-3-1.340-3-3H4.990V5H19v10zm-3-5h-2V7h-4v3H8l4 4 4-4z"/></svg>
<svg style="left:1856px;top:1098px" width="30" height="30" viewBox="0 0 24 24" fill="#4d4d4d"><path d="M15 7v4h1v2h-3V5h2l-3-4-3 4h2v8H8v-2.070c.7-.37 1.200-1.080 1.200-1.930 0-1.210-.99-2.200-2.200-2.200-1.210 0-2.200.99-2.200 2.200 0 .85.5 1.560 1.200 1.930V13c0 1.110.890 2 2 2h3v3.050c-.71.370-1.200 1.100-1.200 1.950 0 1.220.99 2.200 2.200 2.200 1.210 0 2.200-.98 2.200-2.200 0-.85-.49-1.580-1.200-1.950V15h3c1.110 0 2-.89 2-2v-2h1V7h-4z"/></svg>
<!-- event card icons -->
<svg style="left:1831px;top:649px" width="30" height="30" viewBox="0 0 24 24" fill="#000"><path d="M6 19c0 1.100.9 2 2 2h8c1.100 0 2-.9 2-2V7H6v12zM19 4h-3.500l-1-1h-5l-1 1H5v2h14V4z"/></svg>
<svg style="left:372.500px;top:927px" width="30" height="30" viewBox="0 0 30 30" fill="none" stroke="#000" stroke-width="2.100"><path d="M15 6.100v17.800M6.100 15h17.800"/></svg>
<svg style="left:367px;top:1004.500px" width="30" height="30" viewBox="0 0 24 24" fill="#203064"><path d="M14 10H2v2h12v-2zm0-4H2v2h12V6zm4 8v-4h-2v4h-4v2h4v4h2v-4h4v-2h-4zM2 16h8v-2H2v2z"/></svg>
<!-- select arrows -->
<svg style="left:1500px;top:717px" width="12.500" height="6.250" viewBox="0 0 10 5" fill="#757575"><path d="M0 0h10L5 5z"/></svg>
<svg style="left:1746.400px;top:717px" width="12.500" height="6.250" viewBox="0 0 10 5" fill="#757575"><path d="M0 0h10L5 5z"/></svg>
<svg style="left:597.800px;top:872.800px" width="12.500" height="6.250" viewBox="0 0 10 5" fill="#757575"><path d="M0 0h10L5 5z"/></svg>
<!-- checkboxes -->
<div class="cb" style="left:1779px;top:713px"></div>
<svg style="left:1779px;top:713px" width="20" height="20" viewBox="0 0 24 24" fill="none" stroke="#fff" stroke-width="2.600"><path d="M4.100 12.700l5.100 5.200L20.200 6.500"/></svg>
<div class="cb" style="left:453px;top:764px"></div>
<svg style="left:453px;top:764px" width="20" height="20" viewBox="0 0 24 24" fill="none" stroke="#fff" stroke-width="2.600"><path d="M4.100 12.700l5.100 5.200L20.200 6.500"/></svg>
<div class="cbo" style="left:585px;top:764px"></div>
<!-- underlines -->
<div class="ul" style="left:362px;top:736px;width:1155px"></div>
<div class="ul" style="left:1533px;top:736px;width:231px"></div>
<div class="ul" style="left:377px;top:893px;width:238px"></div>
<div class="ul" style="left:630px;top:893px;width:1191px"></div>
<!-- /ICONS -->
</body>
</html>
